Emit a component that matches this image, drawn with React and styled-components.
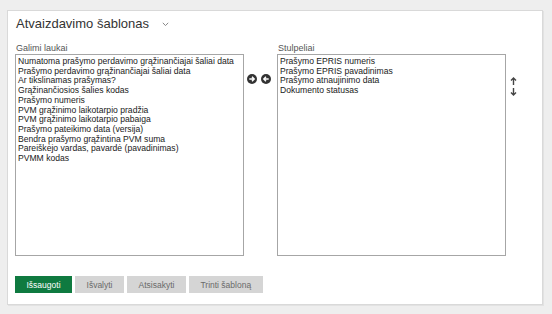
import React from 'react';
import styled, { createGlobalStyle } from 'styled-components';

const GlobalStyle = createGlobalStyle`
	html, body {
		margin: 0;
		padding: 0;
		background: #eeeeee;
		font-family: 'Liberation Sans', Arial, sans-serif;
	}
`;

const available = [
	'Numatoma prašymo perdavimo grąžinančiajai šaliai data',
	'Prašymo perdavimo grąžinančiajai šaliai data',
	'Ar tikslinamas prašymas?',
	'Grąžinančiosios šalies kodas',
	'Prašymo numeris',
	'PVM grąžinimo laikotarpio pradžia',
	'PVM grąžinimo laikotarpio pabaiga',
	'Prašymo pateikimo data (versija)',
	'Bendra prašymo grąžintina PVM suma',
	'Pareiškėjo vardas, pavardė (pavadinimas)',
	'PVMM kodas',
];

const columns = [
	'Prašymo EPRIS numeris',
	'Prašymo EPRIS pavadinimas',
	'Prašymo atnaujinimo data',
	'Dokumento statusas',
];

const CircleArrow = ({ dir }) => (
	<svg width='10' height='10' viewBox='0 0 10 10'>
		<circle cx='5' cy='5' r='5' fill='#333' />
		{dir === 'right' ? (
			<path d='M2.3 5h4.6M5 2.8L7.2 5 5 7.2' stroke='#fff' strokeWidth='1.4' fill='none' />
		) : (
			<path d='M7.7 5H3.1M5 2.8L2.8 5 5 7.2' stroke='#fff' strokeWidth='1.4' fill='none' />
		)}
	</svg>
);

const MoveArrow = ({ dir }) => (
	<svg width='7' height='8' viewBox='0 0 7 8'>
		{dir === 'up' ? (
			<path d='M3.5 8V2M1 3.5L3.5 1 6 3.5' stroke='#444' strokeWidth='1.4' fill='none' />
		) : (
			<path d='M3.5 0v6M1 4.5L3.5 7 6 4.5' stroke='#444' strokeWidth='1.4' fill='none' />
		)}
	</svg>
);

const App = () => {
	return (
		<>
			<GlobalStyle />
			<Page>
				<Panel>
					<Header>
						<Title>Atvaizdavimo šablonas</Title>
						<Chevron>
							<svg width='7' height='5' viewBox='0 0 7 5'>
								<path d='M0.8 0.8L3.5 3.6 6.2 0.8' stroke='#888' strokeWidth='1' fill='none' />
							</svg>
						</Chevron>
					</Header>
					<Lists>
						<Column>
							<Label>Galimi laukai</Label>
							<ListBox>
								{available.map((item) => (
									<Item key={item}>{item}</Item>
								))}
							</ListBox>
						</Column>
						<Transfer>
							<CircleArrow dir='right' />
							<CircleArrow dir='left' />
						</Transfer>
						<Column>
							<Label>Stulpeliai</Label>
							<ListBox>
								{columns.map((item) => (
									<Item key={item}>{item}</Item>
								))}
							</ListBox>
						</Column>
						<Order>
							<MoveArrow dir='up' />
							<MoveArrow dir='down' />
						</Order>
					</Lists>
					<Actions>
						<Button primary>Išsaugoti</Button>
						<Button>Išvalyti</Button>
						<Button>Atsisakyti</Button>
						<Button>Trinti šabloną</Button>
					</Actions>
				</Panel>
			</Page>
		</>
	);
};

export default App;

const Page = styled.div`
	padding: 10px 9px 9px 7px;
`;

const Panel = styled.section`
	background: #ffffff;
	border: 1px solid #d9d9d9;
	box-shadow: 1px 1px 0 #e2e2e2;
	padding: 5px 7px 11px 7px;
	height: 277px;
`;

const Header = styled.div`
	display: flex;
	align-items: center;
	height: 16px;
	padding-left: 1px;
`;

const Title = styled.h1`
	margin: 0;
	font-size: 13px;
	font-weight: normal;
	color: #333;
	line-height: 16px;
`;

const Chevron = styled.span`
	display: flex;
	margin-left: 13px;
	margin-top: 1px;
`;

const Lists = styled.div`
	display: flex;
	align-items: flex-start;
	margin-top: 11px;
`;

const Column = styled.div`
	display: flex;
	flex-direction: column;
	width: 229px;
`;

const Label = styled.div`
	font-size: 9px;
	line-height: 11px;
	color: #555;
	padding-left: 1px;
`;

const ListBox = styled.div`
	height: 196px;
	border: 1px solid #a6a6a6;
	padding: 2px 2px;
`;

const Item = styled.div`
	font-size: 8.6px;
	line-height: 9.7px;
	color: #1a1a1a;
	white-space: nowrap;
`;

const Transfer = styled.div`
	display: flex;
	gap: 4px;
	width: 33px;
	padding: 31px 0 0 3px;
	box-sizing: border-box;
`;

const Order = styled.div`
	display: flex;
	flex-direction: column;
	gap: 3px;
	padding: 34px 0 0 4px;
`;

const Actions = styled.div`
	display: flex;
	gap: 3px;
	margin-top: 20px;
`;

const Button = styled.button`
	height: 17px;
	padding: 0 11.5px;
	border: none;
	font-family: 'Liberation Sans', Arial, sans-serif;
	font-size: 8.5px;
	background: ${(p) => (p.primary ? '#0f7a40' : '#d5d5d5')};
	color: ${(p) => (p.primary ? '#ffffff' : '#6a6a6a')};
`;
